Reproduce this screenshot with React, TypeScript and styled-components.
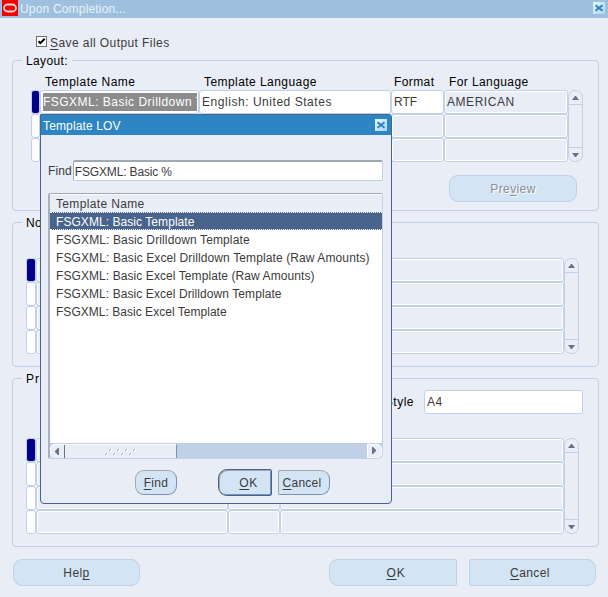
import React from "react";
import styled, { createGlobalStyle, css } from "styled-components";

const c = {
  bg: "#e9eef6",
  line: "#c0d0e6",
  button: "#d3e4f4",
  text: "#3b3b3b",
  navy: "#00008b",
  dialogLine: "#49648c",
  arrow: "#6b6f8a",
};

const GlobalStyle = createGlobalStyle`
  * { box-sizing: border-box; }
  body {
    margin: 0;
    background: ${c.bg};
    font-family: "Liberation Sans", Arial, sans-serif;
    font-size: 12px;
    line-height: 14px;
    color: ${c.text};
    overflow: hidden;
  }
`;

const Window = styled.main`
  position: relative;
  display: flex;
  flex-direction: column;
  width: 608px;
  height: 597px;
  background: ${c.bg};
`;

const Text = styled.span<{ $ls?: number; $color?: string }>`
  white-space: pre;
  letter-spacing: ${(p) => p.$ls ?? 0.4}px;
  color: ${(p) => p.$color ?? "inherit"};
`;

const Key = styled.span`
  text-decoration: underline 1px;
  text-underline-offset: 2px;
  text-decoration-skip-ink: none;
`;

const TitleBar = styled.header`
  display: flex;
  height: 18px;
  padding: 0 3px 0 2px;
  gap: 2px;
  background: #9ec0df;
`;

const TitleText = styled(Text)`
  flex: 1;
  line-height: 18px;
`;

const CloseIcon = styled.svg`
  display: block;
  width: 12px;
  height: 12px;
  margin-top: 2px;
  background: linear-gradient(135deg, #e8f6fc, #abd6f2);
`;

const Close = () => (
  <CloseIcon viewBox="0 0 12 12">
    <path d="M2.5 3.2l7 5.6M9.5 3.2l-7 5.6" fill="none" stroke="#2480c4" strokeWidth="1.8" />
  </CloseIcon>
);

const Logo = styled.svg`
  display: block;
  width: 16px;
  height: 16px;
`;

const Check = styled.div`
  display: flex;
  align-items: center;
  height: 16px;
  margin: 17px 0 9px 36px;
  gap: 3px;
  svg { display: block; margin-bottom: 4px; }
`;

const Group = styled.section<{ $height: number; $after: number }>`
  display: flex;
  flex-direction: column;
  flex: none;
  height: ${(p) => p.$height}px;
  margin: 0 9px ${(p) => p.$after}px 12px;
  border: 1px solid ${c.line};
  border-radius: 4px;
`;

const Legend = styled.h2`
  align-self: flex-start;
  height: 16px;
  margin: -8px 0 0 9px;
  padding: 1px 4px 0;
  font-size: 12px;
  font-weight: 400;
  color: #000;
  background: ${c.bg};
`;

const Headings = styled.div`
  display: grid;
  grid-template-columns: 159px 190px 55px 1fr;
  height: 16px;
  margin: 5px 0 0 32px;
  line-height: 17px;
  color: #000;
`;

const GridArea = styled.div<{ $left: number; $top?: number }>`
  display: flex;
  margin: ${(p) => p.$top ?? 0}px 0 0 ${(p) => p.$left}px;
`;

const Cells = styled.div<{ $cols: string }>`
  display: grid;
  grid-template-columns: ${(p) => p.$cols};
  grid-auto-rows: 24px;
`;

const Cell = styled.div<{ $kind?: "current" | "white" | "plain" }>`
  min-width: 0;
  overflow: hidden;
  border: 1px solid ${c.line};
  border-radius: 3px;
  padding: 4px 2px;
  background: ${(p) => (p.$kind === "current" ? c.navy : p.$kind === "white" ? "#fff" : c.bg)};
  ${(p) => p.$kind !== "current" && css`box-shadow: inset 0 0 0 1px #fff;`}
`;

const Selection = styled.div`
  height: 18px;
  margin: -2px -1px 0 0;
  overflow: hidden;
  line-height: 18px;
  color: #fff;
  background: #8c8c8c;
`;

const Scroll = styled.div`
  display: flex;
  flex-direction: column;
  justify-content: space-between;
  width: 15px;
  border: 1px solid ${c.line};
  border-radius: 7px;
`;

const ScrollEnd = styled.div<{ $down?: boolean }>`
  display: flex;
  justify-content: center;
  align-items: center;
  height: 14px;
  border-${(p) => (p.$down ? "top" : "bottom")}: 1px solid ${c.line};
`;

const ScrollBar = () => (
  <Scroll>
    <ScrollEnd>
      <svg width="7" height="4"><path d="M0 4h7L4 0H3z" fill={c.arrow} /></svg>
    </ScrollEnd>
    <ScrollEnd $down>
      <svg width="7" height="4"><path d="M0 0h7L4 4H3z" fill={c.arrow} /></svg>
    </ScrollEnd>
  </Scroll>
);

const Button = styled.button<{ $w: number; $radius: string; $disabled?: boolean; $pad?: string }>`
  flex: none;
  width: ${(p) => p.$w}px;
  height: 27px;
  padding: ${(p) => p.$pad ?? "0"};
  border: 1px solid ${c.line};
  border-radius: ${(p) => p.$radius};
  background: ${c.button};
  font: inherit;
  color: ${(p) => (p.$disabled ? "#8c8f92" : c.text)};
  ${(p) => p.$disabled && css`text-shadow: 1px 1px 0 #fff;`}
`;

const PreviewRow = styled.div`
  display: flex;
  justify-content: flex-end;
  margin: 13px 21px 0 0;
`;

const StyleRow = styled.div`
  display: flex;
  justify-content: flex-end;
  align-items: center;
  gap: 10px;
  margin: 3px 15px 0 0;
  color: #000;
`;

const Field = styled.div<{ $w: number }>`
  width: ${(p) => p.$w}px;
  height: 24px;
  padding: 4px 2px;
  border: 1px solid ${c.line};
  border-radius: 3px;
  color: ${c.text};
  background: #fff;
`;

const Footer = styled.footer`
  display: flex;
  padding: 0 12px 0 13px;
  gap: 12px;
  > :first-child { margin-right: auto; }
`;

const Dialog = styled.section`
  position: absolute;
  left: 40px;
  top: 114px;
  display: flex;
  flex-direction: column;
  width: 352px;
  height: 390px;
  border: 1px solid ${c.dialogLine};
  border-radius: 0 3px 4px 4px;
  background: ${c.bg};
`;

const DialogTitle = styled.header`
  display: flex;
  height: 20px;
  padding: 2px 4px 0 2px;
  color: #fff;
  background: #2d85c4;
`;

const FindRow = styled.div`
  display: flex;
  align-items: center;
  height: 21px;
  margin: 25px 8px 0 7px;
`;

const FindField = styled.div`
  flex: 1;
  height: 21px;
  margin-left: 1px;
  padding: 3px 1px;
  border: 1px solid ${c.line};
  border-top: 2px solid #a2a8b2;
  border-left-color: #a2a8b2;
  border-radius: 2px;
  background: #fff;
`;

const List = styled.div`
  display: flex;
  flex-direction: column;
  height: 266px;
  margin: 12px 8px 0 7px;
  border: 1px solid ${c.line};
  border-left: 2px solid #a9b1bf;
  border-top-color: #a2a8b2;
  border-radius: 2px 2px 6px 2px;
  background: #fff;
`;

const ListHead = styled.div`
  height: 18px;
  padding: 0 6px;
  line-height: 18px;
  border-top: 1px solid #fff;
  background: ${c.bg};
`;

const Item = styled.div<{ $selected?: boolean }>`
  height: 18px;
  padding: 1px 6px 0;
  line-height: 18px;
  ${(p) => p.$selected && css`
    color: #fff;
    line-height: 16px;
    background: #49648c;
    border-top: 1px dotted #fff;
    border-bottom: 1px dotted #fff;
  `}
`;

const Track = styled.div`
  display: flex;
  justify-content: space-between;
  height: 15px;
  margin-top: auto;
  background: ${c.line};
  border-top: 1px solid ${c.line};
  border-radius: 0 0 5px 2px;
`;

const Thumb = styled.div`
  display: flex;
  width: 127px;
  border-top: 1px solid #fff;
  border-left: 1px solid #fff;
  border-right: 1px solid #7893b5;
  border-radius: 5px 0 0 5px;
  background: ${c.bg};
`;

const TrackEnd = styled.div`
  width: 15px;
  padding: 2px 0 0 4px;
  border: 1px solid #fff;
  border-radius: 0 5px 5px 0;
  background: ${c.bg};
`;

const Actions = styled.div`
  display: flex;
  align-items: center;
  height: 27px;
  margin: 10px 0 0 94px;
`;

const ActionButton = styled(Button)<{ $primary?: boolean }>`
  height: ${(p) => (p.$primary ? 27 : 25)}px;
  border-color: #a3a6aa #7893b5 #7893b5 #a3a6aa;
  ${(p) => p.$primary && css`
    border-color: #49648c;
    box-shadow: inset 1px 1px 0 #a3a6aa, inset -1px -1px 0 #7893b5;
    margin: 0 6px 0 41px;
  `}
`;

const names: [string, number][] = [
  ["FSGXML: Basic Template", 0.06],
  ["FSGXML: Basic Drilldown Template", 0.12],
  ["FSGXML: Basic Excel Drilldown Template (Raw Amounts)", 0.11],
  ["FSGXML: Basic Excel Template (Raw Amounts)", 0.08],
  ["FSGXML: Basic Excel Drilldown Template", 0.08],
  ["FSGXML: Basic Excel Template", 0.03],
];

const EmptyGrid = ({ cols, rows, top }: { cols: string; rows: number; top: number }) => {
  const count = cols.split(" ").length;
  return (
    <GridArea $left={13} $top={top}>
      <Cells $cols={cols}>
        {Array.from({ length: rows * count }, (_, i) => (
          <Cell key={i} $kind={i === 0 ? "current" : i % count === 0 ? "white" : "plain"} />
        ))}
      </Cells>
      <ScrollBar />
    </GridArea>
  );
};

export default function App() {
  return (
    <>
      <GlobalStyle />
      <Window>
        <TitleBar>
          <Logo viewBox="0 0 16 16">
            <rect width="16" height="16" fill="#f80000" />
            <rect x="2" y="4.5" width="12" height="7" rx="3.5" fill="none" stroke="#ffd9d9" strokeWidth="1.8" />
          </Logo>
          <TitleText $ls={0.18} $color="#e9f1f9">Upon Completion...</TitleText>
          <Close />
        </TitleBar>

        <Check>
          <svg width="11" height="11">
            <rect x=".5" y=".5" width="10" height="10" fill="#fff" stroke="#6f6f6f" />
            <path d="M2.5 5.3 4.3 7.1 8.7 2.7" fill="none" stroke="#000" strokeWidth="2" />
          </svg>
          <Text $ls={0.42}><Key>S</Key>ave all Output Files</Text>
        </Check>

        <Group $height={151} $after={11}>
          <Legend><Text $ls={0.35}>Layout:</Text></Legend>
          <Headings>
            <Text $ls={0.5}>Template Name</Text>
            <Text $ls={0.44}>Template Language</Text>
            <Text>Format</Text>
            <Text>For Language</Text>
          </Headings>
          <GridArea $left={18}>
            <Cells $cols="9px 159px 192px 53px 124px">
              <Cell $kind="current" />
              <Cell $kind="white"><Selection><Text $ls={0.48}>FSGXML: Basic Drilldown Template</Text></Selection></Cell>
              <Cell $kind="white"><Text $ls={0.54}>English: United States</Text></Cell>
              <Cell $kind="white"><Text $ls={0}>RTF</Text></Cell>
              <Cell><Text $ls={0.55}>AMERICAN</Text></Cell>
              {Array.from({ length: 10 }, (_, i) => (
                <Cell key={i} $kind={i % 5 < 1 ? "white" : "plain"} />
              ))}
            </Cells>
            <ScrollBar />
          </GridArea>
          <PreviewRow>
            <Button $w={128} $radius="9px" $disabled><Text>Pre<Key>v</Key>iew</Text></Button>
          </PreviewRow>
        </Group>

        <Group $height={145} $after={11}>
          <Legend><Text>Notification</Text></Legend>
          <EmptyGrid cols="10px 528px" rows={4} top={27} />
        </Group>

        <Group $height={169} $after={12}>
          <Legend><Text $ls={1}>Print</Text></Legend>
          <StyleRow>
            <Text $ls={0.5}>Style</Text>
            <Field $w={159}><Text>A4</Text></Field>
          </StyleRow>
          <EmptyGrid cols="10px 192px 52px 284px" rows={4} top={24} />
        </Group>

        <Footer>
          <Button $w={127} $radius="9px"><Text>Hel<Key>p</Key></Text></Button>
          <Button $w={128} $radius="9px 2px 2px 9px" $pad="0 0 0 6px"><Text $ls={0.8}><Key>O</Key>K</Text></Button>
          <Button $w={127} $radius="2px 9px 9px 2px" $pad="0 5px 0 0"><Text><Key>C</Key>ancel</Text></Button>
        </Footer>

        <Dialog>
          <DialogTitle>
            <TitleText $ls={0.14}>Template LOV</TitleText>
            <Close />
          </DialogTitle>
          <FindRow>
            <Text $ls={0.1}>Find</Text>
            <FindField><Text $ls={-0.15}>FSGXML: Basic %</Text></FindField>
          </FindRow>
          <List>
            <ListHead><Text $ls={0.35}>Template Name</Text></ListHead>
            {names.map(([name, spacing], i) => (
              <Item key={name} $selected={i === 0}><Text $ls={spacing}>{name}</Text></Item>
            ))}
            <Track>
              <Thumb>
                <svg width="120" height="13">
                  <path d="M8 3v7H7L4 7V6l3-3z" fill={c.arrow} />
                  <path d="M13.5 0v13" stroke={c.arrow} />
                  {[0, 1, 2, 3].map((n) => (
                    <g key={n} transform={`translate(${n * 8} 0)`}>
                      <path d="M54 10l2-2M58 6l2-2" stroke="#9fb3cc" />
                      <path d="M55 11l2-2M59 7l2-2" stroke="#fff" />
                    </g>
                  ))}
                </svg>
              </Thumb>
              <TrackEnd>
                <svg width="5" height="8" display="block"><path d="M0 0h1l3 3v1L1 7H0z" fill={c.arrow} /></svg>
              </TrackEnd>
            </Track>
          </List>
          <Actions>
            <ActionButton $w={42} $radius="9px"><Text $ls={0.3}><Key>F</Key>ind</Text></ActionButton>
            <ActionButton $w={54} $radius="9px 2px 2px 9px" $pad="0 0 0 7px" $primary><Text $ls={0.5}><Key>O</Key>K</Text></ActionButton>
            <ActionButton $w={52} $radius="2px 9px 9px 2px" $pad="0 4px 0 0"><Text $ls={0.25}><Key>C</Key>ancel</Text></ActionButton>
          </Actions>
        </Dialog>
      </Window>
    </>
  );
}
